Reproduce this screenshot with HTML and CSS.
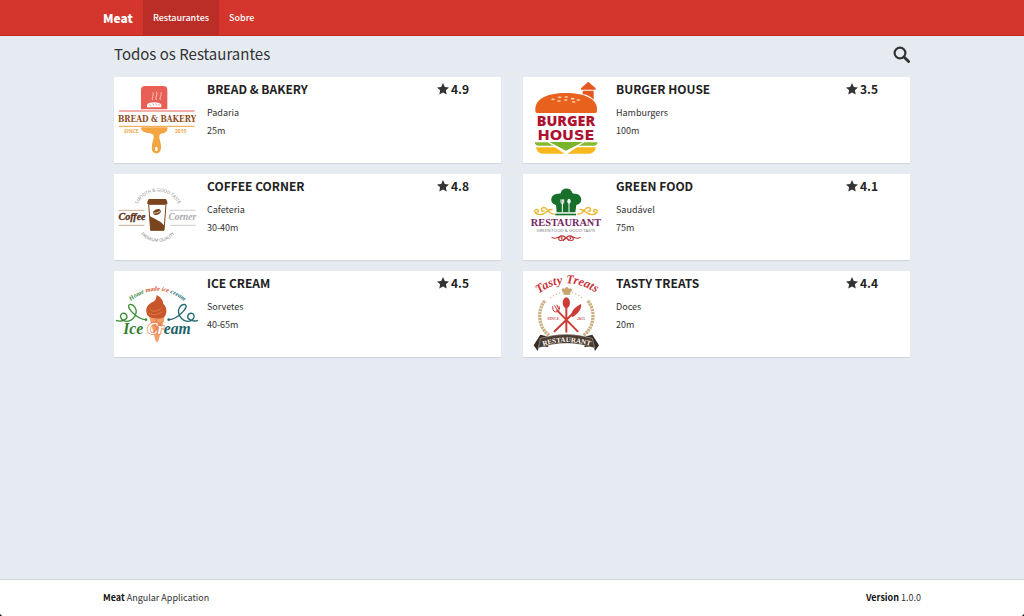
FILE: index.html
```html
<!DOCTYPE html>
<html lang="pt-BR">
<head>
<meta charset="utf-8">
<meta name="viewport" content="width=device-width, initial-scale=1">
<title>Meat</title>
<link rel="stylesheet" href="styles.css">
</head>
<body>
<div class="page">
  <header class="navbar">
    <nav class="container nav">
      <a class="brand" href="#">Meat</a>
      <a class="nav-link active" href="#">Restaurantes</a>
      <a class="nav-link" href="#">Sobre</a>
    </nav>
  </header>

  <main class="container content">
    <div class="heading">
      <h1 class="title">Todos os Restaurantes</h1>
      <button class="search" type="button" aria-label="Buscar">
        <svg viewBox="0 0 17 17" aria-hidden="true"><circle cx="7" cy="7" r="5.4" fill="none" stroke="currentColor" stroke-width="2.2"/><path d="M11 11l4.6 4.6" stroke="currentColor" stroke-width="2.8" stroke-linecap="round"/></svg>
      </button>
    </div>

    <div class="grid">
      <a class="card" href="#">
        <svg class="logo" viewBox="6 9 258 258" aria-hidden="true">
          <path d="M87 106V48q0-12 12-12h55q12 0 12 12v58z" fill="#e85f55"/>
          <path d="M105 100v-6q0-5 6-7 15-5 31 0 6 2 6 7v6z" fill="#fff"/>
          <path d="M113 91l3 5M122 88l3 6M131 88l3 6M140 90l2 5" stroke="#e85f55" stroke-width="2"/>
          <path d="M122 78c-5-8 5-13 1-23M133 78c-5-8 5-15 1-25M145 78c-5-8 6-13 2-23" fill="none" stroke="#fbd9d3" stroke-width="2.5"/>
          <path d="M21 111h227" stroke="#e85f55" stroke-width="3"/>
          <path d="M21 157h227" stroke="#f0a03c" stroke-width="3"/>
          <text class="slab" x="135" y="144" font-size="25" fill="#8c4a1c">BREAD &amp; BAKERY</text>
          <path d="M87 160h79c2 10-4 16-13 18-9 1-12 5-11 14 4 14 7 27 4 36-4 14-22 14-26 0-2-10 1-22 5-36 1-9-3-13-12-14-12-1-28-6-26-18z" fill="#f3a541"/>
          <ellipse cx="133" cy="225" rx="4" ry="7" fill="#fff"/>
          <text class="sans" x="58" y="177" font-size="15" fill="#f0a850">SINCE</text>
          <text class="sans" x="206" y="177" font-size="15" fill="#f0a850">2015</text>
        </svg>
        <div class="info">
          <h2 class="name">BREAD &amp; BAKERY</h2>
          <p class="line">Padaria</p>
          <p class="line">25m</p>
        </div>
        <div class="rating"><svg class="star" viewBox="0 0 24 24" aria-hidden="true"><path d="M12 0l3.6 7.8 8.4 1-6.200 5.900 1.600 8.500L12 19l-7.400 4.200 1.600-8.500L0 8.800l8.400-1z"/></svg>4.9</div>
      </a>

      <a class="card" href="#">
        <svg class="logo" viewBox="3 9 258 258" aria-hidden="true">
          <path d="M177 43l22-20 22 20v4h-44zM182 50h33v27q-12-13-33-17z" fill="#e4581f"/>
          <path d="M40 105c0-28 32-48 92-48s93 20 93 48v6q0 6-6 6H46q-6 0-6-6z" fill="#e8611d"/>
          <g fill="#fbd7b4"><ellipse cx="93" cy="76" rx="6" ry="2.500"/><ellipse cx="113" cy="70" rx="6" ry="2.500"/><ellipse cx="133" cy="69" rx="6" ry="2.500"/><ellipse cx="111" cy="81" rx="6" ry="2.500"/><ellipse cx="131" cy="78" rx="6" ry="2.500"/><ellipse cx="152" cy="74" rx="6" ry="2.500"/><ellipse cx="155" cy="84" rx="6" ry="2.500"/><ellipse cx="169" cy="78" rx="6" ry="2.500"/></g>
          <text class="heavy" fill="#ad1230"><tspan x="132" y="157" font-size="43">BURGER</tspan><tspan class="wide" x="132" y="198" font-size="44">HOUSE</tspan></text>
          <path d="M39 205h187v3q-2 7-9 7H48q-7 0-9-7z" fill="#86b92c"/>
          <path d="M43 220h178v4q-6 15-22 15H65q-17 0-22-15z" fill="#f6b81c"/>
          <path d="M75 203h114l-57 39z" fill="#fff"/>
          <path d="M82 204h101l-51 26z" fill="#79b42a"/>
        </svg>
        <div class="info">
          <h2 class="name">BURGER HOUSE</h2>
          <p class="line">Hamburgers</p>
          <p class="line">100m</p>
        </div>
        <div class="rating"><svg class="star" viewBox="0 0 24 24" aria-hidden="true"><path d="M12 0l3.6 7.8 8.4 1-6.200 5.900 1.600 8.500L12 19l-7.400 4.200 1.600-8.500L0 8.800l8.400-1z"/></svg>3.5</div>
      </a>

      <a class="card" href="#">
        <svg class="logo" viewBox="6 6 258 258" aria-hidden="true">
          <path id="coffee-top" d="M72 110a68 68 0 0 1 132 0" fill="none"/>
          <path id="coffee-bottom" d="M77 172a67 67 0 0 0 120 0" fill="none"/>
          <text class="sans light" font-size="13" fill="#777"><textPath href="#coffee-top" startOffset="50%">SMOOTH &amp; GOOD TASTE</textPath></text>
          <text class="sans light" font-size="13" fill="#777"><textPath href="#coffee-bottom" startOffset="50%">PREMIUM QUALITY</textPath></text>
          <path d="M20 115h77M20 160h77" stroke="#a98768" stroke-width="2"/>
          <path d="M174 115h77M174 160h77" stroke="#b5b5b5" stroke-width="2"/>
          <text class="script" x="60" y="144" font-size="30" fill="#5b3218" stroke="#5b3218">Coffee</text>
          <text class="script" x="211" y="144" font-size="28" fill="#aaa">Corner</text>
          <path d="M110 81h52l4 8v7h-60v-7z" fill="#7a451c"/>
          <path d="M110 97h52l-6 78h-40z" fill="#fff" stroke="#7a451c" stroke-width="3"/>
          <path d="M112 131c16 10 34 15 45 30l-1 14h-40z" fill="#7a451c"/>
          <ellipse cx="135" cy="120" rx="12" ry="8" transform="rotate(-25 135 120)" fill="#7a451c"/>
          <path d="M125 123q10 2 20-6" fill="none" stroke="#fff" stroke-width="2"/>
        </svg>
        <div class="info">
          <h2 class="name">COFFEE CORNER</h2>
          <p class="line">Cafeteria</p>
          <p class="line">30-40m</p>
        </div>
        <div class="rating"><svg class="star" viewBox="0 0 24 24" aria-hidden="true"><path d="M12 0l3.6 7.8 8.4 1-6.200 5.900 1.600 8.500L12 19l-7.400 4.200 1.600-8.500L0 8.800l8.400-1z"/></svg>4.8</div>
      </a>

      <a class="card" href="#">
        <svg class="logo" viewBox="3 6 258 258" aria-hidden="true">
          <path d="M104 121l-2-22c-19-3-20-31 3-34 8 0 10 0 11-2 4-17 31-18 35 0 3 3 6 2 11 2 21 4 21 31 1 34l-3 22z" fill="#176f2b"/>
          <path d="M100 125h62v5h-62z" fill="#176f2b"/>
          <path d="M117 82v9q0 4 4 4t4-4v-9M121 82v39M141 95v26" fill="none" stroke="#fff" stroke-width="3"/>
          <ellipse cx="141" cy="88" rx="5" ry="8" fill="#fff"/>
          <g fill="none" stroke="#e9b62d" stroke-width="4" stroke-linecap="round"><path d="M97 126c-17 3-20-20-32-20-10 2-8 15 1 11M90 113c-14-4-18 16-36 15-17-1-20-15-10-16 7 0 7 8 1 8"/><path d="M167 126c17 3 20-20 32-20 10 2 8 15-1 11M174 113c14-4 18 16 36 15 17-1 20-15 10-16-7 0-7 8-1 8"/></g>
          <text class="serif" x="132" y="162" font-size="31" fill="#752565">RESTAURANT</text>
          <text class="sans light" x="132" y="179" font-size="13" fill="#777">GREEN FOOD &amp; GOOD TASTE</text>
          <g fill="none" stroke="#bd3438" stroke-width="3.500" stroke-linecap="round"><path d="M132 198c-16-18-27 10-42-2M132 198c-12 10-25 10-21-1 5-8 13 1 7 3"/><path d="M132 198c16-18 27 10 42-2M132 198c12 10 25 10 21-1-5-8-13 1-7 3M124 205l8-8 8 8"/></g>
        </svg>
        <div class="info">
          <h2 class="name">GREEN FOOD</h2>
          <p class="line">Saudável</p>
          <p class="line">75m</p>
        </div>
        <div class="rating"><svg class="star" viewBox="0 0 24 24" aria-hidden="true"><path d="M12 0l3.6 7.8 8.4 1-6.200 5.900 1.600 8.500L12 19l-7.400 4.200 1.600-8.500L0 8.800l8.400-1z"/></svg>4.1</div>
      </a>

      <a class="card" href="#">
        <svg class="logo" viewBox="6 9 258 258" aria-hidden="true">
          <path id="ice-top" d="M57 99q77-62 159 0" fill="none"/>
          <text class="script" font-size="19" fill="#3c8a3a"><textPath href="#ice-top" startOffset="50%">Home <tspan fill="#d0532b">made ice</tspan> <tspan fill="#22737a">cream</tspan></textPath></text>
          <path d="M112 148h46l-19 72q-4 4-8 0z" fill="#f2a06a"/>
          <path d="M117 162l31 33M128 152l26 26M153 158l-29 35M140 150l-22 24" stroke="#d36a39" stroke-width="2"/>
          <path d="M103 132c-2-16 8-24 17-29 12-5 13-13 14-22 13 7 19 16 20 27 12 9 13 35-1 41-13 4-28 3-40-1q-9-5-10-16z" fill="#c8562a"/>
          <path d="M112 122c11 14 27 7 38-3M111 135c15 10 27 4 40-4" fill="none" stroke="#e98b58" stroke-width="2"/>
          <g fill="none" stroke-width="4"><path d="M102 155C80 155 55 130 50 118 47 106 62 106 70 120 78 135 65 158 45 160 25 160 20 140 32 136 45 134 50 150 38 155 30 160 20 160 12 157" stroke="#3f8f37"/><path d="M170 155C192 155 217 130 222 118 225 106 210 106 202 120 194 135 207 158 227 160 247 160 252 140 240 136 227 134 222 150 234 155 242 160 250 160 258 157" stroke="#22696e"/></g>
          <circle cx="102" cy="155" r="4" fill="#3f8f37"/><circle cx="170" cy="155" r="4" fill="#22696e"/>
          <text class="script outlined" x="135" y="197" font-size="47"><tspan fill="#337f32">Ice </tspan><tspan fill="#fff" stroke="#e9865a" stroke-width="4">Cr</tspan><tspan fill="#1d6267">eam</tspan></text>
        </svg>
        <div class="info">
          <h2 class="name">ICE CREAM</h2>
          <p class="line">Sorvetes</p>
          <p class="line">40-65m</p>
        </div>
        <div class="rating"><svg class="star" viewBox="0 0 24 24" aria-hidden="true"><path d="M12 0l3.6 7.8 8.4 1-6.200 5.900 1.600 8.500L12 19l-7.400 4.200 1.600-8.500L0 8.800l8.400-1z"/></svg>4.5</div>
      </a>

      <a class="card" href="#">
        <svg class="logo" viewBox="3 9 258 258" aria-hidden="true">
          <path id="tasty-top" d="M47 80q84-66 178-3" fill="none"/>
          <path id="tasty-ribbon" d="M60 235q73-25 148 0" fill="none"/>
          <text class="script" font-size="37" fill="#c9363a"><textPath href="#tasty-top" startOffset="50%">Tasty Treats</textPath></text>
          <g fill="none" stroke="#ccb184" stroke-width="10" stroke-dasharray="7 2"><path d="M81 202C48 178 44 125 70 97"/><path d="M185 202c33-24 37-77 11-105"/></g>
          <path d="M86 89q48-34 94 0" fill="none" stroke="#ccb184" stroke-width="4" stroke-linecap="round" stroke-dasharray="0 10"/>
          <path d="M124 81v-8c-11-5-3-17 4-11 3-7 10-7 13 0 8-5 15 6 4 11v8z" fill="#c5a46e" stroke="#fff" stroke-width="1"/>
          <g fill="none" stroke="#cd3d38" stroke-width="6" stroke-linecap="round"><path d="M106 128l61 62M133 115v76M161 128l-63 62"/><path d="M92 116q0 20 14 15 10-4 5-16M98 113l7 12M105 111l5 12" stroke-width="3"/></g>
          <ellipse cx="133" cy="104" rx="11" ry="16" fill="#cd3d38"/>
          <path d="M146 143c4-17 16-28 31-35 3 11-6 28-25 39z" fill="#cd3d38"/>
          <text class="serif" x="94" y="155" font-size="12" fill="#c95757">SINCE</text>
          <text class="serif" x="177" y="155" font-size="12" fill="#c95757">2015</text>
          <path d="M35 232l20-32 19 5 5 32-28-1-4 13zM231 232l-20-32-19 5-5 32 28-1 4 13z" fill="#382d25"/>
          <path d="M55 211q78-24 156 0l7 29q-84-28-169 0z" fill="#4c3d31" stroke="#fff" stroke-width="1"/>
          <text class="serif" font-size="21" fill="#fff"><textPath href="#tasty-ribbon" startOffset="50%">RESTAURANT</textPath></text>
        </svg>
        <div class="info">
          <h2 class="name">TASTY TREATS</h2>
          <p class="line">Doces</p>
          <p class="line">20m</p>
        </div>
        <div class="rating"><svg class="star" viewBox="0 0 24 24" aria-hidden="true"><path d="M12 0l3.6 7.8 8.4 1-6.200 5.900 1.600 8.500L12 19l-7.400 4.200 1.600-8.500L0 8.800l8.400-1z"/></svg>4.4</div>
      </a>
    </div>
  </main>

  <footer class="footer">
    <div class="container footer-row">
      <span><strong>Meat</strong> Angular Application</span>
      <span><strong>Version</strong> 1.0.0</span>
    </div>
  </footer>
</div>
</body>
</html>
```
FILE: styles.css
```css
* {
  box-sizing: border-box;
}

html {
  background: #111;
}

body {
  margin: 0;
  color: #333;
  font-family: "Noto Sans CJK SC", "Open Sans", sans-serif;
  font-size: 9px;
  line-height: 18px;
}

a {
  color: inherit;
  text-decoration: none;
}

.page {
  display: flex;
  flex-direction: column;
  min-height: 100vh;
  overflow: hidden;
  background: #e6ebf2;
  border-radius: 0 0 4px 4px;
}

.container {
  width: 100%;
  max-width: 818px;
  margin: 0 auto;
}

.navbar {
  background: #d4352c;
  border-bottom: 1px solid #c3281f;
  color: #fff;
}

.nav {
  display: flex;
  font-weight: 500;
  line-height: 35px;
}

.brand {
  padding-right: 10px;
  font-size: 12px;
  font-weight: 900;
}

.nav-link {
  padding: 0 10px;
}

.nav-link.active {
  background: #ba2e27;
}

.content {
  flex: 1;
  padding: 0 11px;
}

.heading {
  display: flex;
  align-items: center;
  justify-content: space-between;
  padding: 9px 0 14px;
}

.title {
  margin: 0;
  font-size: 15px;
  font-weight: 400;
}

.search {
  width: 17px;
  height: 17px;
  padding: 0;
  border: 0;
  background: none;
  color: #333;
}

.search svg,
.logo {
  display: block;
  width: 100%;
}

.grid {
  display: grid;
  grid-template-columns: 1fr 1fr;
  gap: 11px 22px;
}

.card {
  display: grid;
  grid-template-columns: 86px 1fr 64px;
  background: #fff;
  border-radius: 1px;
  box-shadow: 0 1px 1px rgba(0, 0, 0, 0.1);
}

.info {
  padding: 3px 7px;
}

.name,
.rating {
  margin: 0;
  color: #222;
  font-size: 12px;
  font-weight: 700;
  line-height: 18px;
}

.name {
  margin-bottom: 6px;
}

.line {
  margin: 0;
}

.rating {
  display: flex;
  align-items: center;
  align-self: start;
  gap: 2px;
  padding-top: 3px;
}

.star {
  width: 12px;
  height: 12px;
  fill: #333;
}

.footer {
  padding: 9px 0;
  background: #fff;
  border-top: 1px solid #d2d6de;
}

.footer-row {
  display: flex;
  justify-content: space-between;
}

.footer strong {
  color: #111;
}

.logo text {
  text-anchor: middle;
}

.slab {
  font-family: "DejaVu Serif Condensed", "Liberation Serif", serif;
  font-weight: 700;
}

.sans {
  font-family: "Open Sans", sans-serif;
  font-weight: 700;
}

.light {
  font-weight: 400;
}

.heavy {
  font-family: "Open Sans", sans-serif;
  font-weight: 800;
}

.wide {
  font-family: "DejaVu Sans", sans-serif;
}

.serif {
  font-family: "Liberation Serif", serif;
  font-weight: 700;
}

.script {
  font-family: "Liberation Serif", serif;
  font-style: italic;
  font-weight: 700;
}

.outlined {
  paint-order: stroke;
}
```
